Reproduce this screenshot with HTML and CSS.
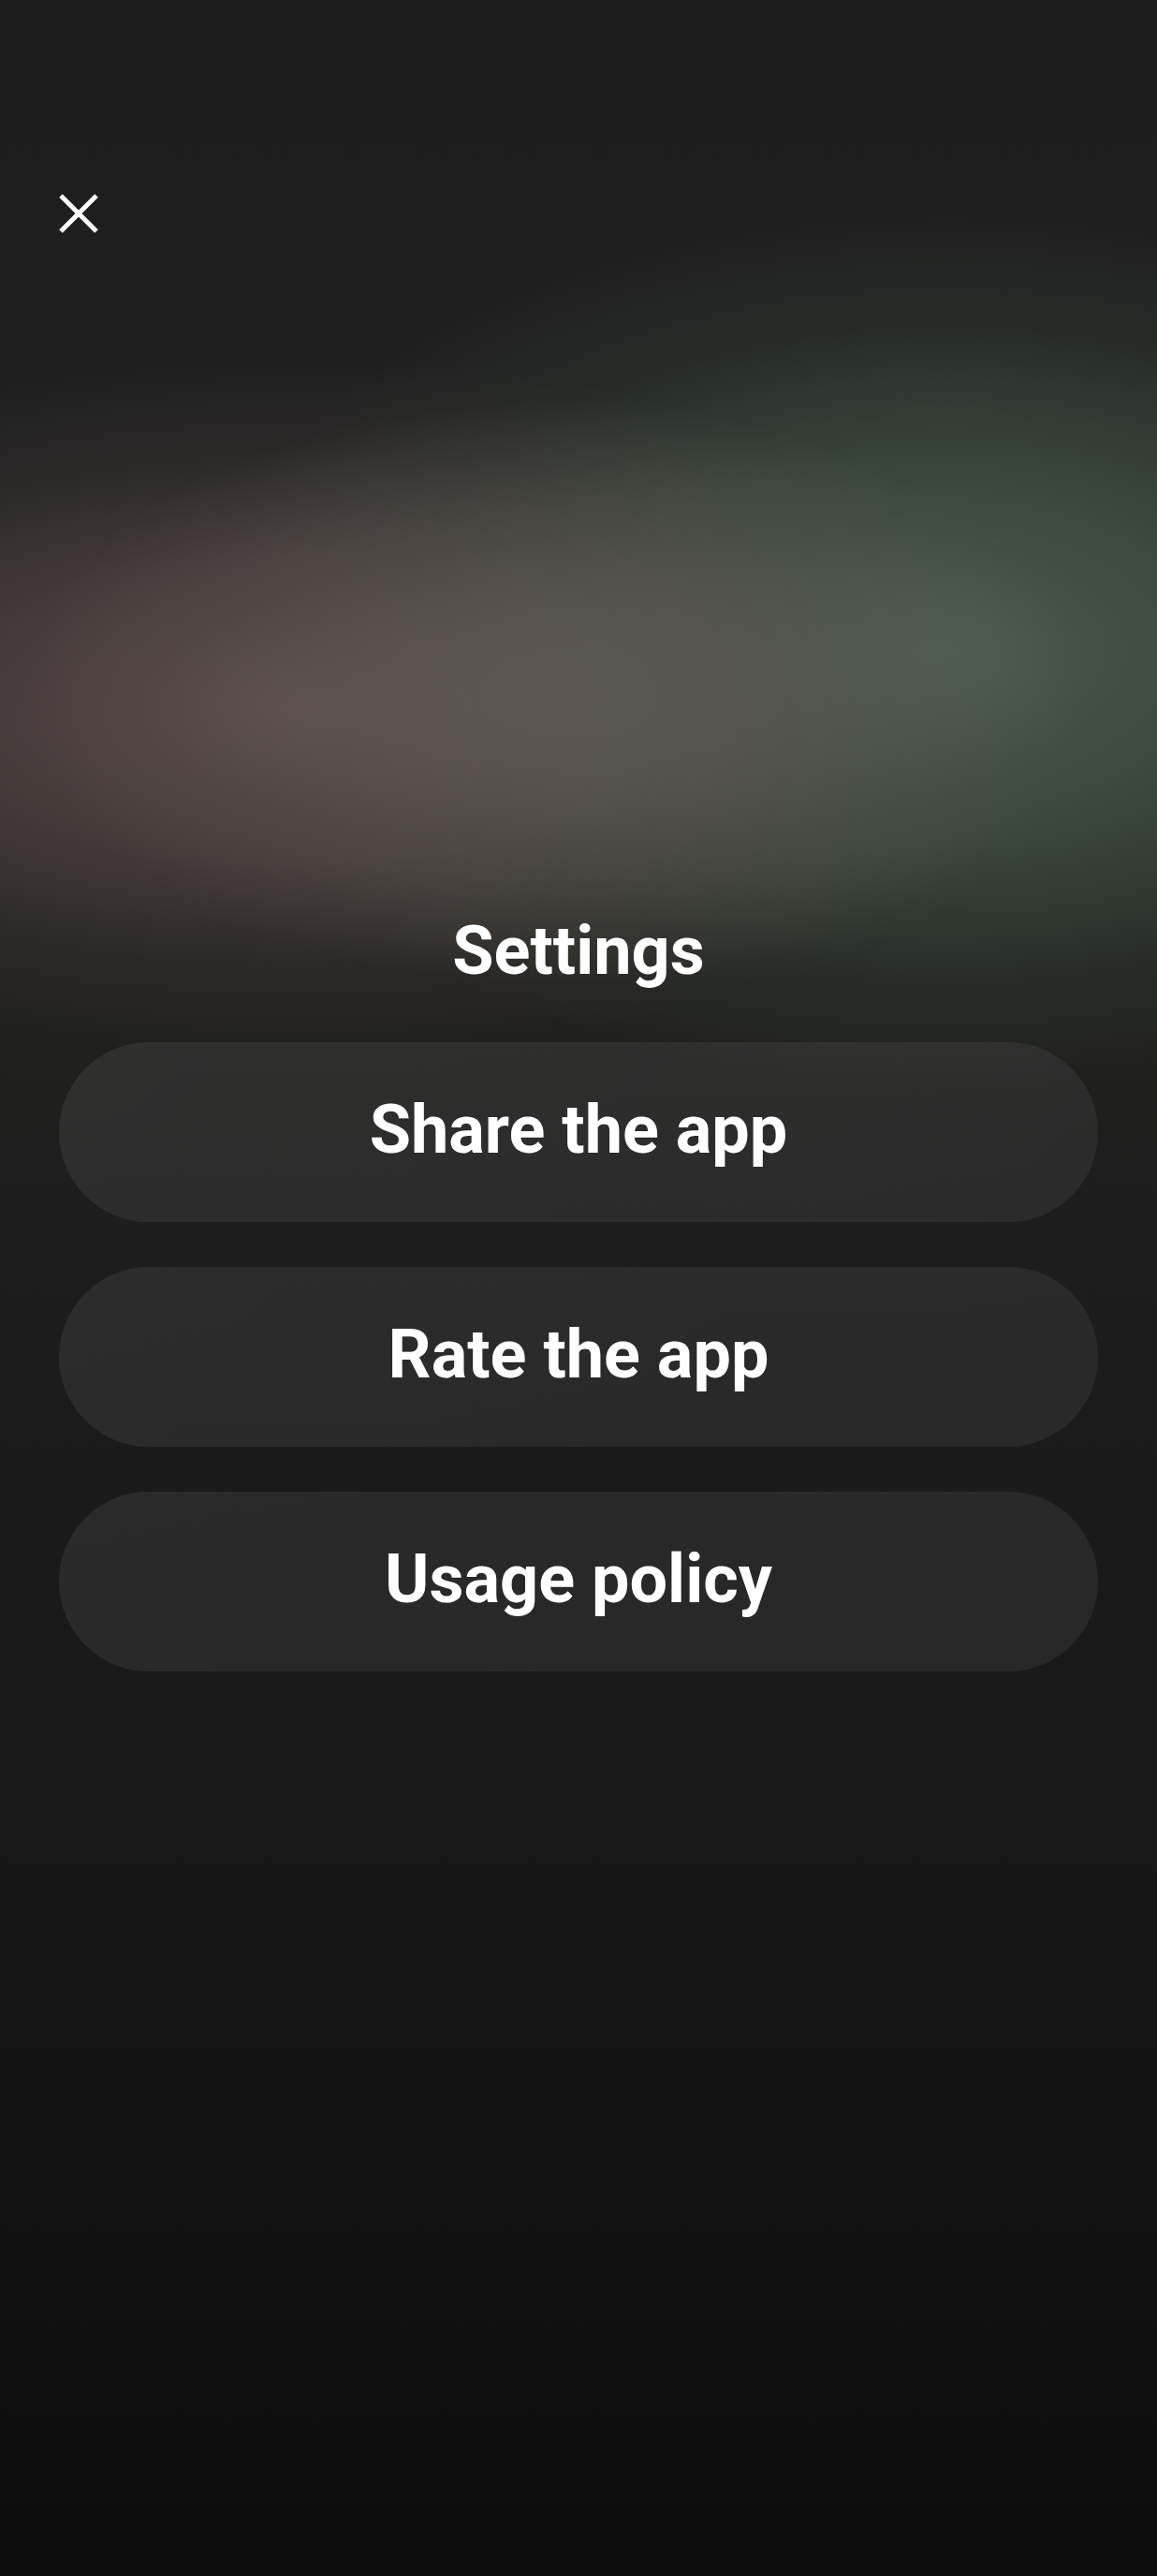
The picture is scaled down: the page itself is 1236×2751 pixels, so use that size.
FILE: index.html
```html
<!DOCTYPE html>
<html lang="en">
<head>
<meta charset="utf-8">
<title>Settings</title>
<link rel="stylesheet" href="styles.css">
</head>
<body>
<div class="screen">
  <header class="topbar">
    <button class="close" aria-label="Close">
      <svg width="42" height="42" viewBox="0 0 42 42" fill="none" stroke="#ffffff" stroke-width="5" stroke-linecap="butt">
        <path d="M2 2 L40 40 M40 2 L2 40"/>
      </svg>
    </button>
  </header>
  <main class="content">
    <h1 class="title">Settings</h1>
    <nav class="menu">
      <button class="item">Share the app</button>
      <button class="item">Rate the app</button>
      <button class="item">Usage policy</button>
    </nav>
  </main>
</div>
</body>
</html>
```
FILE: styles.css
```css
html, body {
  margin: 0;
  padding: 0;
}
body {
  width: 1236px;
  min-height: 2751px;
  font-family: Roboto, "Noto Sans", "Liberation Sans", sans-serif;
  color: #ffffff;
  background:
    radial-gradient(ellipse 560px 310px at 590px 740px, rgba(98, 94, 88, 0.7) 0%, rgba(98, 94, 88, 0.35) 50%, rgba(98, 94, 88, 0) 100%),
    radial-gradient(ellipse 850px 370px at 320px 755px, rgba(94, 78, 77, 0.9) 0%, rgba(94, 78, 77, 0.55) 45%, rgba(94, 78, 77, 0.18) 75%, rgba(94, 78, 77, 0) 100%),
    radial-gradient(ellipse 800px 470px at 1010px 695px, rgba(74, 98, 78, 0.95) 0%, rgba(74, 98, 78, 0.55) 45%, rgba(74, 98, 78, 0.18) 75%, rgba(74, 98, 78, 0) 100%),
    linear-gradient(to bottom, #1d1d1d 0px, #1f1f1f 500px, #222220 900px, #1c1c1c 1400px, #181818 1900px, #0c0c0c 2751px);
}
.screen {
  min-height: 2751px;
  display: flex;
  flex-direction: column;
}
.topbar {
  padding: 207px 0 0 63px;
  height: 42px;
}
.close {
  display: block;
  width: 42px;
  height: 42px;
  padding: 0;
  border: 0;
  background: none;
  cursor: pointer;
}
.close svg {
  display: block;
}
.content {
  display: flex;
  flex-direction: column;
  align-items: center;
  padding: 0 63px;
}
.title {
  margin: 725px 0 0;
  font-size: 72px;
  line-height: 84px;
  font-weight: 700;
  letter-spacing: 0;
}
.menu {
  margin-top: 55px;
  width: 100%;
  display: flex;
  flex-direction: column;
  gap: 48px;
}
.item {
  height: 192px;
  border: 0;
  border-radius: 96px;
  background: linear-gradient(135deg, rgba(255,255,255,0.07), rgba(255,255,255,0.06));
  color: #ffffff;
  font-family: Roboto, "Noto Sans", "Liberation Sans", sans-serif;
  font-size: 72px;
  font-weight: 700;
  display: flex;
  align-items: center;
  justify-content: center;
  padding: 0 0 6px;
}
```
